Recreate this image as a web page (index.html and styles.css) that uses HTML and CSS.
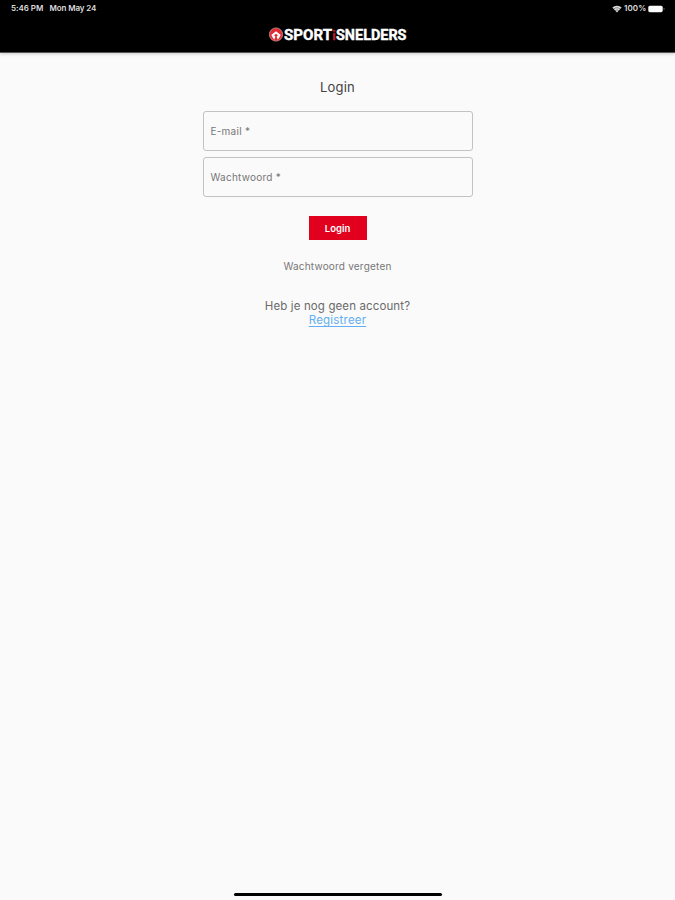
FILE: index.html
```html
<!DOCTYPE html>
<html lang="nl">
<head>
<meta charset="utf-8">
<meta name="viewport" content="width=device-width">
<title>Login</title>
<link rel="stylesheet" href="styles.css">
</head>
<body>
<header class="header">
  <div class="status">
    <span class="time">5:46 PM</span>
    <span class="date">Mon May 24</span>
    <svg class="wifi" width="10" height="8" viewBox="0 0 10 8"><path d="M.4 2.6a6.6 6.6 0 0 1 9.2 0L5 7.6Z" fill="#ddd"/><path d="M1.7 4.1a4.7 4.7 0 0 1 6.6 0M3.2 5.7a2.5 2.5 0 0 1 3.6 0" fill="none" stroke="#000" stroke-width=".4"/></svg>
    <span class="percent">100%</span>
    <svg class="battery" width="17" height="8" viewBox="0 0 17 8"><rect x=".3" y=".8" width="14.4" height="6.4" rx="1.6" fill="#fff"/><path d="M15.6 3v2q1-.2 1-1t-1-1" fill="#777"/></svg>
  </div>
  <div class="brand">
    <svg class="mark" width="14" height="15" viewBox="0 0 14 15"><circle cx="7" cy="7.5" r="6.6" fill="#e12b32" stroke="#d9a9a9" stroke-width=".7"/><path d="M7 4.2 2.2 8l1.2 1.4L7 6.8l3.6 2.6L11.800 8Z" fill="#fff"/><path d="m3 9.600 2.200 3.200 1.200-3L4.900 8ZM11 9.600l-2.200 3.200-1.200-3L9.100 8Z" fill="#fff"/></svg>
    <svg class="wordmark" width="123" height="15" viewBox="0 0 123 15"><text x="0" y="12.500" textLength="48" lengthAdjust="spacingAndGlyphs">SPORT</text><text class="red" x="48.300" y="12.500">i</text><text x="52" y="12.500" textLength="70.500" lengthAdjust="spacingAndGlyphs">SNELDERS</text></svg>
  </div>
</header>
<main class="login">
  <h1>Login</h1>
  <form>
    <div class="field"><span>E-mail *</span></div>
    <div class="field"><span>Wachtwoord *</span></div>
    <button type="button">Login</button>
  </form>
  <p class="forgot">Wachtwoord vergeten</p>
  <p class="question">Heb je nog geen account?</p>
  <a class="register">Registreer</a>
</main>
<div class="home"></div>
</body>
</html>
```
FILE: styles.css
```css
* { box-sizing: border-box; }
body { margin: 0; height: 900px; background: #fafafa; font-family: Inter, sans-serif; color: #505050; display: flex; flex-direction: column; align-items: center; overflow: hidden; }
.header { width: 100%; height: 53px; background: #000; border-bottom: 1px solid #555; box-shadow: 0 1px 3px #0003; flex: none; }
.status { height: 17px; padding: 0 10px 0 11px; display: flex; align-items: center; color: #ddd; font-size: 8px; font-weight: 600; line-height: 17px; white-space: nowrap; }
.time { width: 38.5px; letter-spacing: -.05px; }
.date { letter-spacing: -.12px; }
.wifi { margin-left: auto; margin-right: 2px; }
.percent { width: 24px; font-size: 8px; letter-spacing: .1px; }
.brand { display: flex; justify-content: center; align-items: center; gap: 1px; height: 35px; padding-left: 1px; }
.wordmark text { font: 700 14px Roboto, sans-serif; fill: #fff; stroke: #fff; stroke-width: .4px; }
.wordmark .red { fill: #b81b24; stroke: #b81b24; font-size: 13px; }
.login { width: 270px; flex: 1; display: flex; flex-direction: column; align-items: center; }
h1 { margin: 24px 0 14px; font-size: 13px; line-height: 20px; font-weight: 400; letter-spacing: .2px; color: #424242; }
form { width: 100%; display: flex; flex-direction: column; align-items: center; }
.field { width: 270px; height: 40px; border: 1px solid #c2c2c2; border-radius: 3px; margin-bottom: 6px; padding: 0 0 1px 7px; display: flex; align-items: center; font-size: 10px; letter-spacing: .25px; color: #777; }
.field + .field { margin-bottom: 5px; }
button { width: 58px; height: 24px; margin: 14px 0 0; padding: 0; border: 0; background: #e2001f; color: #fff; font: 600 9.5px Inter, sans-serif; }
.forgot { margin: 19px 0 0; font-size: 10px; line-height: 14px; letter-spacing: .2px; color: #777; }
.question { margin: 26px 0 0; font-size: 11.5px; line-height: 14px; letter-spacing: .12px; color: #6a6a6a; white-space: nowrap; }
.register { font-size: 11.5px; line-height: 14px; letter-spacing: .2px; color: #63aff0; text-decoration: underline; text-underline-offset: 2px; }
.home { width: 208px; height: 3px; margin-bottom: 4px; border-radius: 2px; background: #000; flex: none; }
```
